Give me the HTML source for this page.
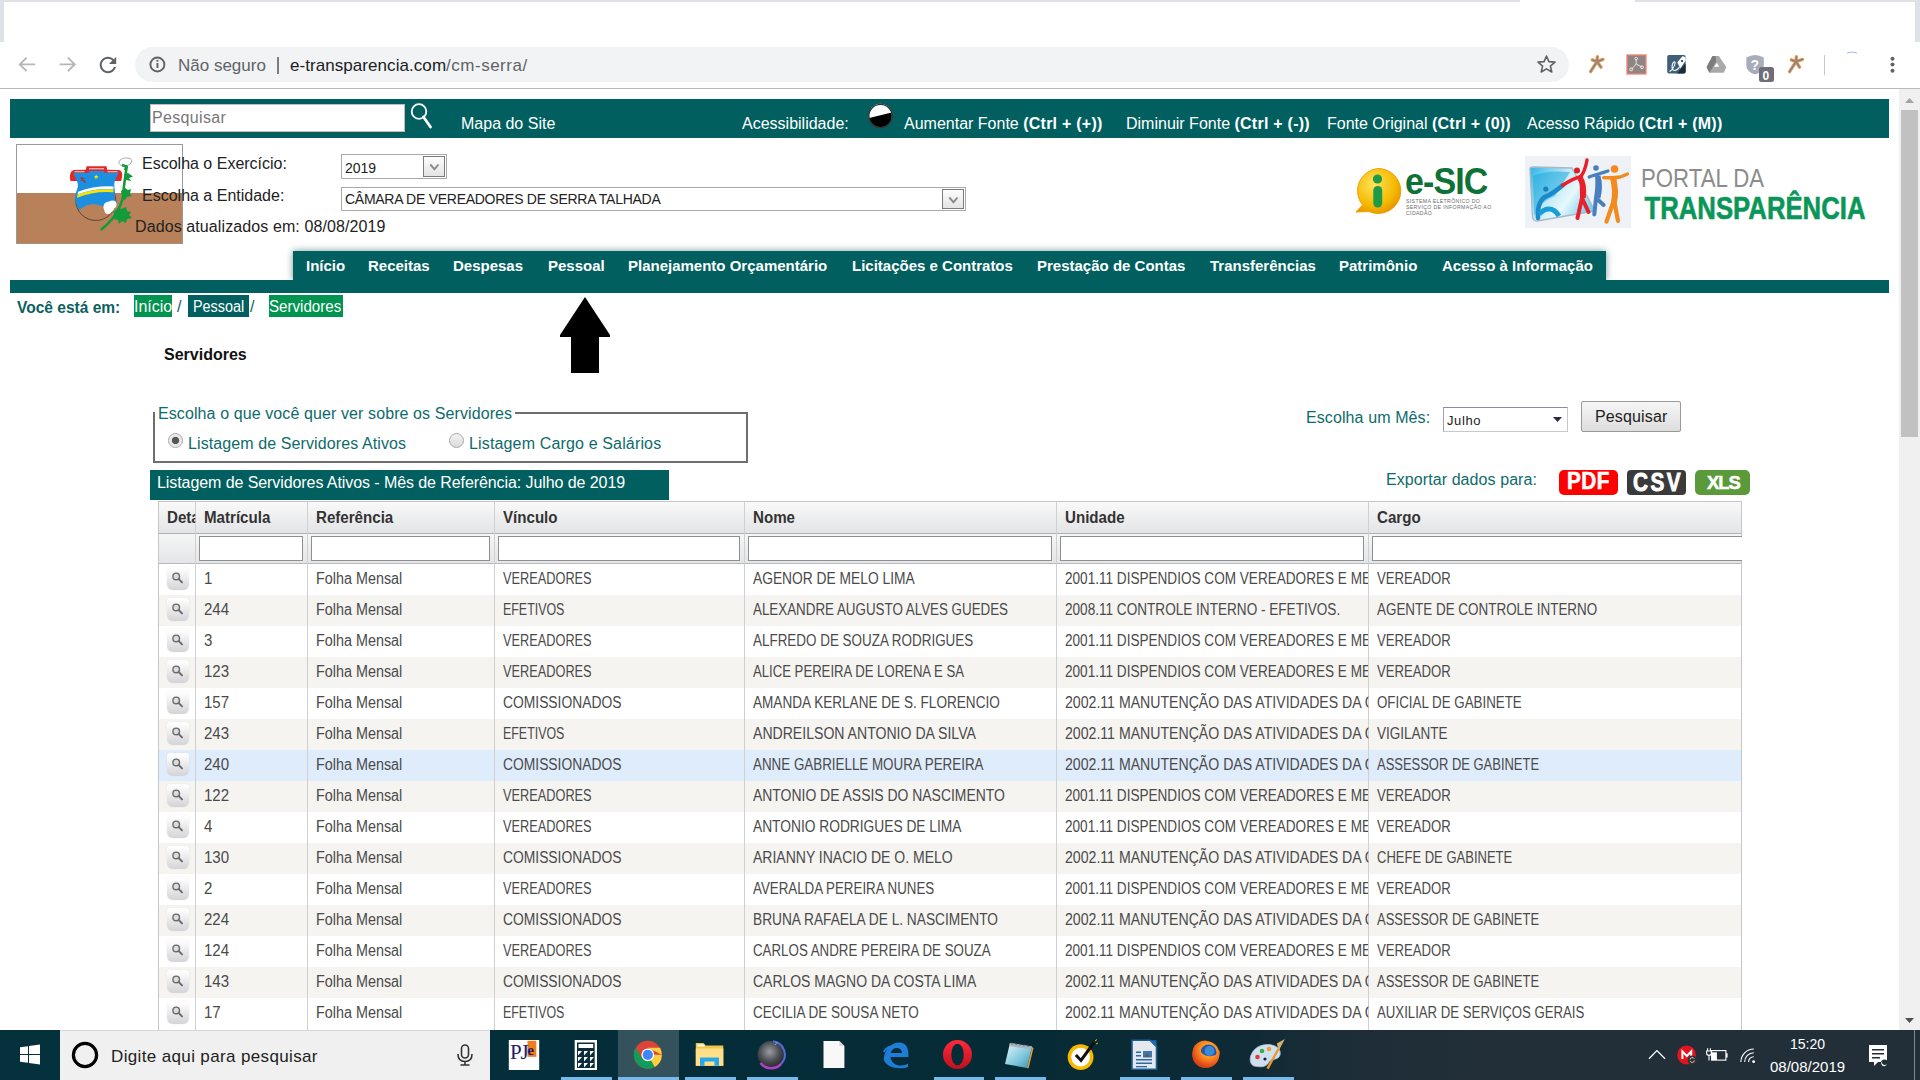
<!DOCTYPE html>
<html><head><meta charset="utf-8">
<style>
*{box-sizing:border-box;margin:0;padding:0}
html,body{width:1920px;height:1080px;overflow:hidden;background:#fff;font-family:"Liberation Sans",sans-serif;position:relative}
.a{position:absolute}
.t{position:absolute;white-space:nowrap;line-height:1}
/* chrome */
#tabstrip{left:0;top:0;width:1920px;height:2px;background:#dee1e6}
#pill{left:135px;top:47px;width:1434px;height:35px;border-radius:18px;background:#f1f3f4}
#addrline{left:0;top:88px;width:1920px;height:1px;background:#b9b9bb}
/* page */
#topbar{left:10px;top:99px;width:1879px;height:39px;background:#025f5f}
#search{left:150px;top:104px;width:255px;height:28px;background:#fff;border:1px solid #c9b9b9}
.wt{color:#fff;font-size:16px}
.sel{position:absolute;background:#fff;border:1px solid #a9a9a9}
.selbtn{position:absolute;border:1px solid #7c7c7c;background:linear-gradient(#fdfdfd,#e4e4e4)}
#nav{left:293px;top:251px;width:1313px;height:30px;background:#025f5f;box-shadow:0 0 7px rgba(2,70,70,.55)}
#navbar{left:10px;top:280px;width:1879px;height:13px;background:#025f5f}
.nv{position:absolute;top:258px;color:#fff;font-weight:bold;font-size:15px;line-height:1}
.bc{position:absolute;top:295px;height:22px;color:#fff;font-size:16px;line-height:22px}
/* table */
#tbl{left:158px;top:501px;width:1584px;height:540px;border:1px solid #c5c7c9;border-bottom:none;overflow:hidden}
.hd{position:absolute;top:0;height:32px;background:linear-gradient(#f9f9f9,#e3e4e6);border-bottom:1px solid #b0b1b4}
.fr{position:absolute;top:32px;height:30px;background:linear-gradient(#f6f6f6,#e4e5e7);border-bottom:1px solid #b8b9bc}
.vl{position:absolute;top:502px;width:1px;height:528px;background:#cfd0d2}
.fi{position:absolute;top:536px;height:25px;background:#fff;border:1px solid #8f8f8f}
.ht{position:absolute;top:510px;font-weight:bold;font-size:16px;color:#333;line-height:1;white-space:nowrap;transform:scaleX(0.944);transform-origin:0 0}
.row{position:absolute;left:159px;width:1582px;height:31px}
.row.e{background:#f5f4f1}
.row.h{background:#dfecfb}
.c{position:absolute;font-size:16px;color:#4a4a4a;line-height:22px;white-space:nowrap;overflow:hidden;transform-origin:0 0}
.db{position:absolute;width:22px;height:23px;border-radius:3px 3px 6px 6px;background:linear-gradient(#fdfdfd 10%,#e8e8ea 55%,#d4d4d8);box-shadow:0 0 1px #ccc}
/* taskbar */
#task{left:0;top:1030px;width:1920px;height:50px;background:linear-gradient(to right,#05303c 0px,#042e3a 500px,#052b36 1000px,#0f2a35 1250px,#1d2d37 1340px,#222f38 1500px,#222f38 1920px)}
</style></head><body>

<!-- browser chrome -->
<div class="a" id="tabstrip"></div>
<div class="a" style="left:1520px;top:0;width:115px;height:2px;background:#fff"></div>
<div class="a" style="left:0;top:0;width:4px;height:42px;background:#dee1e6"></div>
<div class="a" style="left:1915px;top:0;width:5px;height:42px;background:#dee1e6"></div>
<div class="a" id="pill"></div>
<div class="a" id="addrline"></div>


<!-- toolbar icons -->
<svg class="a" style="left:0;top:42px" width="1920" height="46">
 <g stroke="#b4b7ba" stroke-width="1.9" fill="none" stroke-linecap="butt">
  <path d="M20.5 22.4 H35.2 M26.6 15.6 L19.8 22.4 L26.6 29.2"/>
  <path d="M59.6 22.4 H74.3 M67.9 15.6 L74.7 22.4 L67.9 29.2"/>
 </g>
 <path transform="translate(95.6 10.6) scale(1.03)" d="M17.65 6.35C16.2 4.9 14.21 4 12 4c-4.42 0-7.99 3.58-7.99 8s3.57 8 7.99 8c3.73 0 6.84-2.55 7.73-6h-2.08c-.82 2.33-3.04 4-5.65 4-3.31 0-6-2.690-6-6s2.69-6 6-6c1.66 0 3.14.69 4.22 1.78L13 11h7V4l-2.35 2.35z" fill="#5f6368"/>
 <circle cx="157.4" cy="22.5" r="7" stroke="#5f6368" stroke-width="1.9" fill="none"/>
 <rect x="156.5" y="21" width="1.9" height="5" fill="#5f6368"/><rect x="156.5" y="17.8" width="1.9" height="1.9" fill="#5f6368"/>
 <polygon points="1546.5,14 1548.9,19.6 1555,20.1 1550.4,24.1 1551.8,30 1546.5,26.9 1541.2,30 1542.6,24.1 1538,20.1 1544.1,19.6" fill="none" stroke="#5f6368" stroke-width="1.6" stroke-linejoin="round"/>
 <g transform="translate(0 0)">
  <g stroke="#f39a3c" stroke-width="3.4" stroke-linecap="round" fill="none"><path d="M1592.3 17.8 L1597 19.6 M1597.4 14.6 L1597 19.6 M1603 17.4 L1597 19.6 L1601 25.2 M1597 19.6 L1590.6 29.6"/></g>
  <g stroke="#5b86c0" stroke-width="1.3" stroke-linecap="round" fill="none"><path d="M1592.3 17.8 L1597 19.6 M1597.4 14.6 L1597 19.6 M1603 17.4 L1597 19.6 L1601 25.2 M1597 19.6 L1590.6 29.6"/></g>
  <circle cx="1597" cy="19.6" r="1.3" fill="#f07020"/>
 </g>
 <rect x="1627" y="13" width="19" height="19" fill="#8f8585" stroke="#f2846e" stroke-width="1.3"/>
 <g stroke="#f4eeee" stroke-width="0.9" fill="none"><path d="M1636.2 17.5 L1636.2 22 L1631.5 27.3 M1636.2 22 L1641.8 25"/><circle cx="1636.2" cy="16.6" r="1.3"/><circle cx="1631.2" cy="27.4" r="1.5"/><circle cx="1642" cy="25.2" r="1.4"/></g>
 <rect x="1667.2" y="12.9" width="18.4" height="18.7" rx="1.8" fill="#3f6076"/>
 <path d="M1685.6 21.5 L1685.6 29.8 Q1685.6 31.6 1683.8 31.6 L1677 31.6 Z" fill="#1e2a36"/>
 <path d="M1677.3 20.6 L1682.6 14.1 L1685.6 15.6 L1685.6 18.5 L1680.3 26.6 Z" fill="#fff"/>
 <circle cx="1682" cy="19" r="1.1" fill="#1e2a36"/>
 <path d="M1669.5 29.5 C1672 28 1674.5 24 1675 21.5 C1675.5 19 1673.5 19.5 1672.5 22 C1671.5 25 1672 28.5 1674.5 28.5 C1676.5 28.5 1678.5 26.5 1679.5 25" stroke="#fff" stroke-width="1.1" fill="none"/>
 <polygon points="1712.5,14.1 1718.8,14.1 1726.3,25 1723.8,30.7 1709.4,30.7 1706.6,25" fill="#a9a9a9"/>
 <polygon points="1712.5,14.1 1715.6,14.1 1716.2,19.5 1709.4,30.7 1706.6,25" fill="#7c7c7c"/>
 <polygon points="1716.9,20.7 1714,24.75 1719.2,24.75" fill="#fff"/>
 <path d="M1746.3 15.5 Q1755 10.5 1763.8 15.5 L1763.8 23 C1763.8 28.5 1759 31.5 1755 32.3 C1751 31.5 1746.3 28.5 1746.3 23 Z" fill="#a8adb9"/>
 <text x="1750.6" y="27.6" font-family="Liberation Sans" font-weight="bold" font-size="14" fill="#fff">?</text>
 <rect x="1759" y="67" width="15" height="15" rx="2.5" fill="#6e6e7a" transform="translate(0 -42)"/>
 <text x="1762.4" y="37.6" font-family="Liberation Sans" font-weight="bold" font-size="12" fill="#fff">0</text>
 <g stroke="#f39a3c" stroke-width="3.4" stroke-linecap="round" fill="none"><path d="M1791.3 17.8 L1796 19.6 M1796.4 14.6 L1796 19.6 M1802.5 17.4 L1796 19.6 L1799.5 25.2 M1796 19.6 L1789.6 29.6"/></g>
 <g stroke="#5b86c0" stroke-width="1.3" stroke-linecap="round" fill="none"><path d="M1791.3 17.8 L1796 19.6 M1796.4 14.6 L1796 19.6 M1802.5 17.4 L1796 19.6 L1799.5 25.2 M1796 19.6 L1789.6 29.6"/></g>
 <circle cx="1796" cy="19.6" r="1.3" fill="#f07020"/>
 <rect x="1824" y="13" width="1" height="20" fill="#c8c8c8"/>
 <path d="M1847 11 Q1852 9 1857 11" stroke="#a9b6e0" stroke-width="1" fill="none"/>
 <circle cx="1892.5" cy="16.7" r="2" fill="#5f6368"/><circle cx="1892.5" cy="22.6" r="2" fill="#5f6368"/><circle cx="1892.5" cy="28.8" r="2" fill="#5f6368"/>
</svg>
<div class="t" style="left:178px;top:57px;font-size:17px;color:#5f6368">Não seguro</div>
<div class="a" style="left:277px;top:57px;width:2px;height:17px;background:#7a7d82"></div>
<div class="t" style="left:290px;top:57px;font-size:17px;color:#202124"><span style="letter-spacing:0.06px">e-transparencia.com</span><span style="color:#5f6368;letter-spacing:0.5px">/cm-serra/</span></div>

<!-- scrollbar -->
<div class="a" style="left:1899px;top:89px;width:21px;height:941px;background:#f0f0f0"></div>
<svg class="a" style="left:1899px;top:89px" width="21" height="941"><polygon points="6,14 15,14 10.5,9" fill="#a3a3a3"/><polygon points="6,929 15,929 10.5,934" fill="#505050"/></svg>
<div class="a" style="left:1901px;top:110px;width:17px;height:327px;background:#c1c1c1"></div>

<!-- page header bar -->
<div class="a" id="topbar"></div>
<div class="a" id="search"></div>
<div class="t" style="left:152px;top:110px;font-size:16px;color:#777;letter-spacing:0.35px">Pesquisar</div>

<svg class="a" style="left:405px;top:99px" width="40" height="39"><circle cx="14" cy="12.5" r="7.3" stroke="#fff" stroke-width="1.8" fill="none"/><line x1="18.5" y1="18" x2="25.5" y2="28" stroke="#fff" stroke-width="2.8" stroke-linecap="round"/></svg>
<svg class="a" style="left:866px;top:102px" width="28" height="28"><circle cx="14.5" cy="14" r="11.5" fill="#000" stroke="#555" stroke-width="1"/><path d="M3.3 16 A11.3 11.3 0 0 1 25.7 10.5 Z" fill="#fff"/><circle cx="14.5" cy="14" r="11.6" fill="none" stroke="#333" stroke-width="1.2"/></svg>
<div class="t wt" style="left:461px;top:116px">Mapa do Site</div>
<div class="t wt" style="left:742px;top:116px">Acessibilidade:</div>
<div class="t wt" style="left:904px;top:116px">Aumentar Fonte <b style="letter-spacing:0.25px">(Ctrl + (+))</b></div>
<div class="t wt" style="left:1126px;top:116px">Diminuir Fonte <b style="letter-spacing:0.25px">(Ctrl + (-))</b></div>
<div class="t wt" style="left:1327px;top:116px">Fonte Original <b style="letter-spacing:0.25px">(Ctrl + (0))</b></div>
<div class="t wt" style="left:1527px;top:116px">Acesso Rápido <b style="letter-spacing:0.25px">(Ctrl + (M))</b></div>

<!-- selectors -->
<!-- city flag logo -->
<svg class="a" style="left:16px;top:144px" width="168" height="101">
 <rect x="0.5" y="0.5" width="166" height="99" fill="#fff" stroke="#9a9a9a"/>
 <rect x="1" y="49" width="165" height="50.5" fill="#b98159"/>
 <circle cx="79.8" cy="56.5" r="20" fill="#b98159" stroke="#3a2a20" stroke-width="0.7"/>
 <path d="M54.5 37 C53 31 54.5 27 58 26 L69.8 25.8 L70.5 22.3 L90.5 22.3 L91.2 25.8 L103 26 C106.5 27 107 31 105.2 37 Z" fill="#e22828"/>
 <path d="M57.5 28.8 L73 28.8 L73 27 L88 27 L88 28.8 L102.8 28.8 C101 33 98 37 98.2 41 C98.5 45 99.5 48 98.6 51 C98 55 100 57 101.5 59.3 C96 59 92 61 88 63 C80 59 72 59 63.2 66 C60 60 58.5 55 59.4 51 C60.5 46 62 44 61.9 41 C61.5 36 58.5 33 57.5 28.8 Z" fill="#1b90e0"/>
 <g fill="#fff" opacity="0.85"><rect x="73" y="24.3" width="15" height="1"/><rect x="58.5" y="27.3" width="10" height="0.9"/><rect x="91.5" y="27.3" width="10" height="0.9"/></g>
 <path d="M61.5 50.5 Q79 44 97.5 45.5 L97.5 48.2 Q79 46.5 61 53.8 Z" fill="#f2e600"/>
 <path d="M62 47.8 Q79 41.5 97.5 42.5 L97.5 45.3 Q79 44 61.7 50.3 Z" fill="#fff"/>
 <path d="M64.5 33.5 L68.5 37 M68 33.8 L65 36.5 M67.5 36.5 L69.5 38.5" stroke="#c82020" stroke-width="1.3"/>
 <path d="M80.2 30.5 l0.7 1.6 1.7 0.1 -1.3 1.1 0.4 1.7 -1.5 -0.9 -1.5 0.9 0.4 -1.7 -1.3 -1.1 1.7 -0.1 z" fill="#f2e600"/>
 <circle cx="93" cy="63" r="5.6" fill="#fff"/><circle cx="96.5" cy="60.5" r="4" fill="#fff"/><circle cx="92" cy="66.5" r="3.5" fill="#fff"/>
 <path d="M84.8 86 C92 80 99 73 102.3 66 C105 60 107.3 55 107.3 51 C107.5 42 109.5 32 110.7 22.7" stroke="#139a3a" stroke-width="2.6" fill="none"/>
 <path d="M108 31 l4 -2 l5 3.5 l-4 1.5 l2 3 l-5 -1 l-2 -2 z" fill="#139a3a"/>
 <path d="M105 47 l4 -3 l3 2 l3 -1 l-1 5 l2 2 l-5 1 l-2 3 l-3 -3 z" fill="#139a3a"/>
 <path d="M97 68 l5 -4 l3 1 l5 -2 l1 4 l4 1 l-2 3 l3 3 l-5 1 l-1 4 l-4 -2 l-3 3 l-1 -4 l-4 -1 l2 -3 z" fill="#139a3a"/>
 <path d="M103 18.5 C103 15 109 13 114 14.5 C117 16 116 20 111 21.5 C106 22.5 103 21 103 18.5 Z" fill="#fff" stroke="#888" stroke-width="0.7"/>
 <path d="M106 21 L110.5 22.5 L109 26" stroke="#139a3a" stroke-width="2.4" fill="none"/>
</svg>


<div class="t" style="left:142px;top:156px;font-size:16px;color:#222">Escolha o Exercício:</div>
<div class="t" style="left:142px;top:188px;font-size:16px;color:#222">Escolha a Entidade:</div>
<div class="t" style="left:135px;top:219px;font-size:16px;color:#222;letter-spacing:0.1px">Dados atualizados em: 08/08/2019</div>
<div class="sel" style="left:341px;top:154px;width:106px;height:25px"></div>
<div class="selbtn" style="left:423px;top:156px;width:22px;height:21px"><svg width="20" height="19" style="position:absolute;left:0;top:0"><path d="M6.3 7.5 L10.5 12.2 L14.5 7.5" stroke="#8a8a8a" stroke-width="1.9" fill="none"/></svg></div>
<div class="t" style="left:345px;top:161px;font-size:14px;color:#222">2019</div>
<div class="sel" style="left:341px;top:187px;width:625px;height:24px"></div>
<div class="selbtn" style="left:942px;top:189px;width:22px;height:20px"><svg width="20" height="19" style="position:absolute;left:0;top:0"><path d="M6.3 7.5 L10.5 12.2 L14.5 7.5" stroke="#8a8a8a" stroke-width="1.9" fill="none"/></svg></div>
<div class="t" style="left:345px;top:192px;font-size:14px;color:#222;letter-spacing:-0.27px">CÂMARA DE VEREADORES DE SERRA TALHADA</div>


<!-- e-SIC logo -->
<svg class="a" style="left:1340px;top:150px" width="180" height="80">
 <defs><radialGradient id="yb" cx="40%" cy="35%" r="65%"><stop offset="0" stop-color="#ffe45a"/><stop offset="0.75" stop-color="#f5b800"/><stop offset="1" stop-color="#e89a00"/></radialGradient></defs>
 <path d="M37.5 18.5 A22.5 22.5 0 1 1 29 61.5 L16 62 L22.5 55 A22.5 22.5 0 0 1 37.5 18.5 Z" fill="url(#yb)" stroke="#eea000" stroke-width="1"/>
 <circle cx="37.5" cy="29" r="4.6" fill="#1e9a48"/>
 <rect x="33.3" y="36" width="8.9" height="21.5" rx="4.45" fill="#1e9a48"/>
 <text x="65" y="44" font-family="Liberation Sans" font-weight="bold" font-size="37" fill="#0e7236" letter-spacing="-1" transform="translate(65 0) scale(0.92 1) translate(-65 0)">e-SIC</text>
 <g font-family="Liberation Sans" font-size="5.2" fill="#6a6a6a" letter-spacing="0.35">
 <text x="66" y="53">SISTEMA ELETRÔNICO DO</text>
 <text x="66" y="59">SERVIÇO DE INFORMAÇÃO AO</text>
 <text x="66" y="64.8">CIDADÃO</text></g>
</svg>

<!-- portal logo -->
<svg class="a" style="left:1525px;top:156px" width="350" height="74">
 <defs><linearGradient id="scr" x1="0" y1="0" x2="1" y2="1"><stop offset="0" stop-color="#bfe6f8"/><stop offset="0.5" stop-color="#3fb0e0"/><stop offset="1" stop-color="#1a8cc8"/></linearGradient></defs>
 <rect x="0" y="0" width="106" height="72" fill="#eef2f6"/>
 <defs><linearGradient id="scr2" x1="0" y1="0" x2="1" y2="0.6"><stop offset="0" stop-color="#29b6e6"/><stop offset="0.45" stop-color="#bfeaf8"/><stop offset="0.7" stop-color="#e8f8fd"/><stop offset="1" stop-color="#7fd0ee"/></linearGradient></defs>
 <path d="M5 13 Q5 11 8 11 L47 12 L70 55 L12 65 Q8 65 7.5 61 Z" fill="url(#scr2)" stroke="#a8b8c4" stroke-width="1.3"/>
 <path d="M8 20 Q20 14 45 16 L30 40 Q15 45 9 60 Z" fill="#1ea8dc" opacity="0.55"/>
 <circle cx="20.8" cy="33" r="2.6" fill="#1a7fb8"/>
 <path d="M13 62 C12 50 16 42 22 40 C27 38 32 34 37.5 29.5" stroke="#1a8ac8" stroke-width="4.5" fill="none" stroke-linecap="round"/>
 <path d="M14 58 C20 52 28 50 34 60" stroke="#17a0d8" stroke-width="5" fill="none"/>
 <circle cx="52" cy="14.5" r="3" fill="#d8202a"/>
 <path d="M37.5 29.5 C44 25 50 22 56 20.5 C59 16 61 10 62 4" stroke="#e8202a" stroke-width="3.4" fill="none" stroke-linecap="round"/>
 <path d="M56 20.5 C57 30 57 38 57 42 L52.5 62 M57 42 L63.5 56" stroke="#e8202a" stroke-width="4" fill="none" stroke-linecap="round"/>
 <path d="M55 22 C58 26 59 34 58 42" stroke="#e8202a" stroke-width="5.5" fill="none"/>
 <circle cx="71" cy="12" r="2.8" fill="#4a7fbf"/>
 <path d="M64.2 21 C68 19 74 18 83 15" stroke="#4a7fbf" stroke-width="3.2" fill="none" stroke-linecap="round"/>
 <path d="M72 19 C73 28 72 36 71 42 L69.3 58.4 M71 42 L78.6 49" stroke="#4a7fbf" stroke-width="4" fill="none" stroke-linecap="round"/>
 <path d="M73 20 C75 27 75 34 73 42" stroke="#4a7fbf" stroke-width="5" fill="none"/>
 <circle cx="89.5" cy="13" r="3.8" fill="#f28a1e"/>
 <path d="M78.6 21.6 C85 22 90 22 95 21 C98 20 100 19 102.5 18" stroke="#f28a1e" stroke-width="3.4" fill="none" stroke-linecap="round"/>
 <path d="M89 22 C90 30 90 38 89 44 L81.5 65.6 M89 44 L93 64.9" stroke="#f28a1e" stroke-width="4.2" fill="none" stroke-linecap="round"/>
 <path d="M88 22 C90 30 91 38 89 46" stroke="#f28a1e" stroke-width="6" fill="none"/>
 <text x="116" y="30.6" font-family="Liberation Sans" font-size="26" fill="#8c8c8c" transform="translate(116 0) scale(0.855 1) translate(-116 0)">PORTAL DA</text>
 <text x="119.5" y="63" font-family="Liberation Sans" font-weight="bold" font-size="31" fill="#0a9658" stroke="#0a9658" stroke-width="0.6" transform="translate(119.5 0) scale(0.83 1) translate(-119.5 0)">TRANSPARÊNCIA</text>
</svg>

<!-- nav -->
<div class="a" id="nav"></div>
<div class="a" id="navbar"></div>
<div class="nv" style="left:306px">Início</div>
<div class="nv" style="left:368px">Receitas</div>
<div class="nv" style="left:453px">Despesas</div>
<div class="nv" style="left:548px">Pessoal</div>
<div class="nv" style="left:628px">Planejamento Orçamentário</div>
<div class="nv" style="left:852px">Licitações e Contratos</div>
<div class="nv" style="left:1037px">Prestação de Contas</div>
<div class="nv" style="left:1210px">Transferências</div>
<div class="nv" style="left:1339px">Patrimônio</div>
<div class="nv" style="left:1442px">Acesso à Informação</div>

<!-- breadcrumb -->
<div class="t" style="left:17px;top:300px;font-size:16px;font-weight:bold;color:#0b5f5f;transform:scaleX(0.97);transform-origin:0 0">Você está em:</div>
<div class="bc" style="left:134px;width:38px;background:#009450"></div>
<div class="bc" style="left:188px;width:61px;background:#025f5f"></div>
<div class="bc" style="left:269px;width:74px;background:#009450"></div>

<div class="t" style="left:164px;top:347px;font-size:16px;font-weight:bold;color:#111">Servidores</div>

<!-- arrow -->
<svg class="a" style="left:0;top:0" width="1920" height="400"><polygon points="585,297 610,335 610,337 599,337 599,373 571,373 571,337 560,337 560,335" fill="#000"/></svg>


<!-- breadcrumb text -->
<div class="t" style="left:134px;top:299px;font-size:16px;color:#fff">Início</div>
<div class="t" style="left:177px;top:299px;font-size:16px;color:#0b5f5f">/</div>
<div class="t" style="left:193px;top:299px;font-size:16px;color:#fff;transform:scaleX(0.9);transform-origin:0 0">Pessoal</div>
<div class="t" style="left:250px;top:299px;font-size:16px;color:#0b5f5f">/</div>
<div class="t" style="left:269px;top:299px;font-size:16px;color:#fff;transform:scaleX(0.944);transform-origin:0 0">Servidores</div>

<!-- fieldset -->
<div class="a" style="left:153px;top:412px;width:595px;height:51px;border:2px solid #6e6e6e;border-top:none"></div>
<div class="a" style="left:515px;top:412px;width:233px;height:2px;background:#6e6e6e"></div>
<div class="t" style="left:158px;top:406px;font-size:16px;color:#0e6b6b;letter-spacing:0.1px">Escolha o que você quer ver sobre os Servidores</div>
<div class="a" style="left:168px;top:433px;width:15px;height:15px;border-radius:50%;border:1px solid #a8a8a8;background:radial-gradient(circle,#555 0,#555 3.2px,#e0e0e0 4px,#f4f4f4 7px)"></div>
<div class="t" style="left:188px;top:436px;font-size:16px;color:#0e6b6b;letter-spacing:0.1px">Listagem de Servidores Ativos</div>
<div class="a" style="left:449px;top:433px;width:15px;height:15px;border-radius:50%;border:1px solid #a8a8a8;background:linear-gradient(#f2f2f2,#dcdcdc)"></div>
<div class="t" style="left:469px;top:436px;font-size:16px;color:#0e6b6b;letter-spacing:0.15px">Listagem Cargo e Salários</div>

<!-- month -->
<div class="t" style="left:1306px;top:410px;font-size:16px;color:#0e6b6b;letter-spacing:0.1px">Escolha um Mês:</div>
<div class="a" style="left:1443px;top:407px;width:125px;height:25px;border:1px solid #c8c8d2;border-top-color:#8a8aa0;border-left-color:#a0a0b4;background:#fff"></div>
<div class="t" style="left:1447px;top:414px;font-size:13px;color:#222;letter-spacing:0.6px">Julho</div>
<svg class="a" style="left:1553px;top:417px" width="9" height="6"><polygon points="0,0 9,0 4.5,5" fill="#2a2a40"/></svg>
<div class="a" style="left:1581px;top:401px;width:100px;height:31px;border:1px solid #999;border-radius:2px;background:linear-gradient(#f6f6f6,#dddddd)"></div>
<div class="t" style="left:1595px;top:409px;font-size:16px;color:#222;letter-spacing:0.15px">Pesquisar</div>

<!-- title bar -->
<div class="a" style="left:150px;top:470px;width:519px;height:30px;background:#025f5f"></div>
<div class="t" style="left:157px;top:475px;font-size:16px;color:#fff;letter-spacing:-0.08px">Listagem de Servidores Ativos - Mês de Referência: Julho de 2019</div>

<!-- export -->
<div class="t" style="left:1386px;top:472px;font-size:16px;color:#0e6b6b;letter-spacing:0.08px">Exportar dados para:</div>
<div class="a" style="left:1559px;top:470px;width:59px;height:25px;border-radius:5px;background:#f00"></div>
<div class="t" style="left:1567px;top:470px;font-size:23px;font-weight:bold;color:#fff;-webkit-text-stroke:0.6px #fff;transform:scaleX(0.9);transform-origin:0 0;letter-spacing:0.5px">PDF</div>
<div class="a" style="left:1627px;top:470px;width:59px;height:25px;border-radius:4px;background:#3a3a3a"></div>
<div class="t" style="left:1633px;top:469px;font-size:26px;font-weight:bold;color:#fff;-webkit-text-stroke:0.9px #fff;transform:scaleX(0.8);transform-origin:0 0;letter-spacing:3px">CSV</div>
<div class="a" style="left:1695px;top:470px;width:55px;height:25px;border-radius:5px;background:#5b9a3b"></div>
<div class="t" style="left:1707px;top:474px;font-size:18.5px;font-weight:bold;color:#fff;-webkit-text-stroke:0.5px #fff;letter-spacing:-1.1px">XLS</div>

<!-- TABLE -->
<div class="row" style="top:564px"></div>
<div class="row e" style="top:595px"></div>
<div class="row" style="top:626px"></div>
<div class="row e" style="top:657px"></div>
<div class="row" style="top:688px"></div>
<div class="row e" style="top:719px"></div>
<div class="row h" style="top:750px"></div>
<div class="row e" style="top:781px"></div>
<div class="row" style="top:812px"></div>
<div class="row e" style="top:843px"></div>
<div class="row" style="top:874px"></div>
<div class="row e" style="top:905px"></div>
<div class="row" style="top:936px"></div>
<div class="row e" style="top:967px"></div>
<div class="row" style="top:998px"></div>
<div class="hd" style="left:159px;top:502px;width:1582px"></div>
<div class="fr" style="left:159px;top:534px;width:1582px"></div>
<div class="vl" style="left:195px"></div>
<div class="vl" style="left:307px"></div>
<div class="vl" style="left:494px"></div>
<div class="vl" style="left:744px"></div>
<div class="vl" style="left:1056px"></div>
<div class="vl" style="left:1368px"></div>
<div class="a" style="left:158px;top:501px;width:1584px;height:1px;background:#c5c6c8"></div>
<div class="a" style="left:158px;top:501px;width:1px;height:529px;background:#c5c6c8"></div>
<div class="a" style="left:1741px;top:501px;width:1px;height:529px;background:#c5c6c8"></div>
<div class="ht" style="left:167px;width:30px;overflow:hidden">Detalhes</div>
<div class="ht" style="left:204px;width:109px;overflow:hidden">Matrícula</div>
<div class="ht" style="left:316px;width:189px;overflow:hidden">Referência</div>
<div class="ht" style="left:503px;width:255px;overflow:hidden">Vínculo</div>
<div class="ht" style="left:753px;width:321px;overflow:hidden">Nome</div>
<div class="ht" style="left:1065px;width:321px;overflow:hidden">Unidade</div>
<div class="ht" style="left:1377px;width:386px;overflow:hidden">Cargo</div>
<div class="fi" style="left:199px;width:104px"></div>
<div class="fi" style="left:311px;width:179px"></div>
<div class="fi" style="left:498px;width:242px"></div>
<div class="fi" style="left:748px;width:304px"></div>
<div class="fi" style="left:1060px;width:304px"></div>
<div class="fi" style="left:1372px;width:373px"></div>
<div class="a" style="left:1742px;top:534px;width:10px;height:30px;background:#fff"></div>
<div class="db" style="left:167px;top:567px"><svg width="22" height="22"><circle cx="9.2" cy="9.4" r="3.3" fill="#dcdcdc" stroke="#6a6a6a" stroke-width="1.4"/><line x1="11.6" y1="11.9" x2="15" y2="15.4" stroke="#6a6a6a" stroke-width="2" stroke-linecap="round"/></svg></div>
<div class="c" style="left:204px;top:568px;width:110px;transform:scaleX(0.94)">1</div>
<div class="c" style="left:316px;top:568px;width:198px;transform:scaleX(0.8979)">Folha Mensal</div>
<div class="c" style="left:503px;top:568px;width:302px;transform:scaleX(0.7973)">VEREADORES</div>
<div class="c" style="left:753px;top:568px;width:352px;transform:scaleX(0.8617)">AGENOR DE MELO LIMA</div>
<div class="c" style="left:1065px;top:568px;width:357px;transform:scaleX(0.8484)">2001.11 DISPENDIOS COM VEREADORES E MESA</div>
<div class="c" style="left:1377px;top:568px;width:443px;transform:scaleX(0.8222)">VEREADOR</div>
<div class="db" style="left:167px;top:598px"><svg width="22" height="22"><circle cx="9.2" cy="9.4" r="3.3" fill="#dcdcdc" stroke="#6a6a6a" stroke-width="1.4"/><line x1="11.6" y1="11.9" x2="15" y2="15.4" stroke="#6a6a6a" stroke-width="2" stroke-linecap="round"/></svg></div>
<div class="c" style="left:204px;top:599px;width:110px;transform:scaleX(0.94)">244</div>
<div class="c" style="left:316px;top:599px;width:198px;transform:scaleX(0.8979)">Folha Mensal</div>
<div class="c" style="left:503px;top:599px;width:311px;transform:scaleX(0.7759)">EFETIVOS</div>
<div class="c" style="left:753px;top:599px;width:363px;transform:scaleX(0.8354)">ALEXANDRE AUGUSTO ALVES GUEDES</div>
<div class="c" style="left:1065px;top:599px;width:357px;transform:scaleX(0.8488)">2008.11 CONTROLE INTERNO - EFETIVOS.</div>
<div class="c" style="left:1377px;top:599px;width:433px;transform:scaleX(0.8397)">AGENTE DE CONTROLE INTERNO</div>
<div class="db" style="left:167px;top:629px"><svg width="22" height="22"><circle cx="9.2" cy="9.4" r="3.3" fill="#dcdcdc" stroke="#6a6a6a" stroke-width="1.4"/><line x1="11.6" y1="11.9" x2="15" y2="15.4" stroke="#6a6a6a" stroke-width="2" stroke-linecap="round"/></svg></div>
<div class="c" style="left:204px;top:630px;width:110px;transform:scaleX(0.94)">3</div>
<div class="c" style="left:316px;top:630px;width:198px;transform:scaleX(0.8979)">Folha Mensal</div>
<div class="c" style="left:503px;top:630px;width:302px;transform:scaleX(0.7973)">VEREADORES</div>
<div class="c" style="left:753px;top:630px;width:361px;transform:scaleX(0.8397)">ALFREDO DE SOUZA RODRIGUES</div>
<div class="c" style="left:1065px;top:630px;width:357px;transform:scaleX(0.8484)">2001.11 DISPENDIOS COM VEREADORES E MESA</div>
<div class="c" style="left:1377px;top:630px;width:443px;transform:scaleX(0.8222)">VEREADOR</div>
<div class="db" style="left:167px;top:660px"><svg width="22" height="22"><circle cx="9.2" cy="9.4" r="3.3" fill="#dcdcdc" stroke="#6a6a6a" stroke-width="1.4"/><line x1="11.6" y1="11.9" x2="15" y2="15.4" stroke="#6a6a6a" stroke-width="2" stroke-linecap="round"/></svg></div>
<div class="c" style="left:204px;top:661px;width:110px;transform:scaleX(0.94)">123</div>
<div class="c" style="left:316px;top:661px;width:198px;transform:scaleX(0.8979)">Folha Mensal</div>
<div class="c" style="left:503px;top:661px;width:302px;transform:scaleX(0.7973)">VEREADORES</div>
<div class="c" style="left:753px;top:661px;width:369px;transform:scaleX(0.821)">ALICE PEREIRA DE LORENA E SA</div>
<div class="c" style="left:1065px;top:661px;width:357px;transform:scaleX(0.8484)">2001.11 DISPENDIOS COM VEREADORES E MESA</div>
<div class="c" style="left:1377px;top:661px;width:443px;transform:scaleX(0.8222)">VEREADOR</div>
<div class="db" style="left:167px;top:691px"><svg width="22" height="22"><circle cx="9.2" cy="9.4" r="3.3" fill="#dcdcdc" stroke="#6a6a6a" stroke-width="1.4"/><line x1="11.6" y1="11.9" x2="15" y2="15.4" stroke="#6a6a6a" stroke-width="2" stroke-linecap="round"/></svg></div>
<div class="c" style="left:204px;top:692px;width:110px;transform:scaleX(0.94)">157</div>
<div class="c" style="left:316px;top:692px;width:198px;transform:scaleX(0.8979)">Folha Mensal</div>
<div class="c" style="left:503px;top:692px;width:279px;transform:scaleX(0.865)">COMISSIONADOS</div>
<div class="c" style="left:753px;top:692px;width:357px;transform:scaleX(0.8488)">AMANDA KERLANE DE S. FLORENCIO</div>
<div class="c" style="left:1065px;top:692px;width:344px;transform:scaleX(0.882)">2002.11 MANUTENÇÃO DAS ATIVIDADES DA CAMARA</div>
<div class="c" style="left:1377px;top:692px;width:437px;transform:scaleX(0.8333)">OFICIAL DE GABINETE</div>
<div class="db" style="left:167px;top:722px"><svg width="22" height="22"><circle cx="9.2" cy="9.4" r="3.3" fill="#dcdcdc" stroke="#6a6a6a" stroke-width="1.4"/><line x1="11.6" y1="11.9" x2="15" y2="15.4" stroke="#6a6a6a" stroke-width="2" stroke-linecap="round"/></svg></div>
<div class="c" style="left:204px;top:723px;width:110px;transform:scaleX(0.94)">243</div>
<div class="c" style="left:316px;top:723px;width:198px;transform:scaleX(0.8979)">Folha Mensal</div>
<div class="c" style="left:503px;top:723px;width:311px;transform:scaleX(0.7759)">EFETIVOS</div>
<div class="c" style="left:753px;top:723px;width:345px;transform:scaleX(0.8795)">ANDREILSON ANTONIO DA SILVA</div>
<div class="c" style="left:1065px;top:723px;width:344px;transform:scaleX(0.882)">2002.11 MANUTENÇÃO DAS ATIVIDADES DA CAMARA</div>
<div class="c" style="left:1377px;top:723px;width:431px;transform:scaleX(0.8452)">VIGILANTE</div>
<div class="db" style="left:167px;top:753px"><svg width="22" height="22"><circle cx="9.2" cy="9.4" r="3.3" fill="#dcdcdc" stroke="#6a6a6a" stroke-width="1.4"/><line x1="11.6" y1="11.9" x2="15" y2="15.4" stroke="#6a6a6a" stroke-width="2" stroke-linecap="round"/></svg></div>
<div class="c" style="left:204px;top:754px;width:110px;transform:scaleX(0.94)">240</div>
<div class="c" style="left:316px;top:754px;width:198px;transform:scaleX(0.8979)">Folha Mensal</div>
<div class="c" style="left:503px;top:754px;width:279px;transform:scaleX(0.865)">COMISSIONADOS</div>
<div class="c" style="left:753px;top:754px;width:362px;transform:scaleX(0.8362)">ANNE GABRIELLE MOURA PEREIRA</div>
<div class="c" style="left:1065px;top:754px;width:344px;transform:scaleX(0.882)">2002.11 MANUTENÇÃO DAS ATIVIDADES DA CAMARA</div>
<div class="c" style="left:1377px;top:754px;width:449px;transform:scaleX(0.81)">ASSESSOR DE GABINETE</div>
<div class="db" style="left:167px;top:784px"><svg width="22" height="22"><circle cx="9.2" cy="9.4" r="3.3" fill="#dcdcdc" stroke="#6a6a6a" stroke-width="1.4"/><line x1="11.6" y1="11.9" x2="15" y2="15.4" stroke="#6a6a6a" stroke-width="2" stroke-linecap="round"/></svg></div>
<div class="c" style="left:204px;top:785px;width:110px;transform:scaleX(0.94)">122</div>
<div class="c" style="left:316px;top:785px;width:198px;transform:scaleX(0.8979)">Folha Mensal</div>
<div class="c" style="left:503px;top:785px;width:302px;transform:scaleX(0.7973)">VEREADORES</div>
<div class="c" style="left:753px;top:785px;width:348px;transform:scaleX(0.8709)">ANTONIO DE ASSIS DO NASCIMENTO</div>
<div class="c" style="left:1065px;top:785px;width:357px;transform:scaleX(0.8484)">2001.11 DISPENDIOS COM VEREADORES E MESA</div>
<div class="c" style="left:1377px;top:785px;width:443px;transform:scaleX(0.8222)">VEREADOR</div>
<div class="db" style="left:167px;top:815px"><svg width="22" height="22"><circle cx="9.2" cy="9.4" r="3.3" fill="#dcdcdc" stroke="#6a6a6a" stroke-width="1.4"/><line x1="11.6" y1="11.9" x2="15" y2="15.4" stroke="#6a6a6a" stroke-width="2" stroke-linecap="round"/></svg></div>
<div class="c" style="left:204px;top:816px;width:110px;transform:scaleX(0.94)">4</div>
<div class="c" style="left:316px;top:816px;width:198px;transform:scaleX(0.8979)">Folha Mensal</div>
<div class="c" style="left:503px;top:816px;width:302px;transform:scaleX(0.7973)">VEREADORES</div>
<div class="c" style="left:753px;top:816px;width:352px;transform:scaleX(0.8601)">ANTONIO RODRIGUES DE LIMA</div>
<div class="c" style="left:1065px;top:816px;width:357px;transform:scaleX(0.8484)">2001.11 DISPENDIOS COM VEREADORES E MESA</div>
<div class="c" style="left:1377px;top:816px;width:443px;transform:scaleX(0.8222)">VEREADOR</div>
<div class="db" style="left:167px;top:846px"><svg width="22" height="22"><circle cx="9.2" cy="9.4" r="3.3" fill="#dcdcdc" stroke="#6a6a6a" stroke-width="1.4"/><line x1="11.6" y1="11.9" x2="15" y2="15.4" stroke="#6a6a6a" stroke-width="2" stroke-linecap="round"/></svg></div>
<div class="c" style="left:204px;top:847px;width:110px;transform:scaleX(0.94)">130</div>
<div class="c" style="left:316px;top:847px;width:198px;transform:scaleX(0.8979)">Folha Mensal</div>
<div class="c" style="left:503px;top:847px;width:279px;transform:scaleX(0.865)">COMISSIONADOS</div>
<div class="c" style="left:753px;top:847px;width:346px;transform:scaleX(0.875)">ARIANNY INACIO DE O. MELO</div>
<div class="c" style="left:1065px;top:847px;width:344px;transform:scaleX(0.882)">2002.11 MANUTENÇÃO DAS ATIVIDADES DA CAMARA</div>
<div class="c" style="left:1377px;top:847px;width:448px;transform:scaleX(0.8133)">CHEFE DE GABINETE</div>
<div class="db" style="left:167px;top:877px"><svg width="22" height="22"><circle cx="9.2" cy="9.4" r="3.3" fill="#dcdcdc" stroke="#6a6a6a" stroke-width="1.4"/><line x1="11.6" y1="11.9" x2="15" y2="15.4" stroke="#6a6a6a" stroke-width="2" stroke-linecap="round"/></svg></div>
<div class="c" style="left:204px;top:878px;width:110px;transform:scaleX(0.94)">2</div>
<div class="c" style="left:316px;top:878px;width:198px;transform:scaleX(0.8979)">Folha Mensal</div>
<div class="c" style="left:503px;top:878px;width:302px;transform:scaleX(0.7973)">VEREADORES</div>
<div class="c" style="left:753px;top:878px;width:364px;transform:scaleX(0.833)">AVERALDA PEREIRA NUNES</div>
<div class="c" style="left:1065px;top:878px;width:357px;transform:scaleX(0.8484)">2001.11 DISPENDIOS COM VEREADORES E MESA</div>
<div class="c" style="left:1377px;top:878px;width:443px;transform:scaleX(0.8222)">VEREADOR</div>
<div class="db" style="left:167px;top:908px"><svg width="22" height="22"><circle cx="9.2" cy="9.4" r="3.3" fill="#dcdcdc" stroke="#6a6a6a" stroke-width="1.4"/><line x1="11.6" y1="11.9" x2="15" y2="15.4" stroke="#6a6a6a" stroke-width="2" stroke-linecap="round"/></svg></div>
<div class="c" style="left:204px;top:909px;width:110px;transform:scaleX(0.94)">224</div>
<div class="c" style="left:316px;top:909px;width:198px;transform:scaleX(0.8979)">Folha Mensal</div>
<div class="c" style="left:503px;top:909px;width:279px;transform:scaleX(0.865)">COMISSIONADOS</div>
<div class="c" style="left:753px;top:909px;width:354px;transform:scaleX(0.8566)">BRUNA RAFAELA DE L. NASCIMENTO</div>
<div class="c" style="left:1065px;top:909px;width:344px;transform:scaleX(0.882)">2002.11 MANUTENÇÃO DAS ATIVIDADES DA CAMARA</div>
<div class="c" style="left:1377px;top:909px;width:449px;transform:scaleX(0.81)">ASSESSOR DE GABINETE</div>
<div class="db" style="left:167px;top:939px"><svg width="22" height="22"><circle cx="9.2" cy="9.4" r="3.3" fill="#dcdcdc" stroke="#6a6a6a" stroke-width="1.4"/><line x1="11.6" y1="11.9" x2="15" y2="15.4" stroke="#6a6a6a" stroke-width="2" stroke-linecap="round"/></svg></div>
<div class="c" style="left:204px;top:940px;width:110px;transform:scaleX(0.94)">124</div>
<div class="c" style="left:316px;top:940px;width:198px;transform:scaleX(0.8979)">Folha Mensal</div>
<div class="c" style="left:503px;top:940px;width:302px;transform:scaleX(0.7973)">VEREADORES</div>
<div class="c" style="left:753px;top:940px;width:364px;transform:scaleX(0.8322)">CARLOS ANDRE PEREIRA DE SOUZA</div>
<div class="c" style="left:1065px;top:940px;width:357px;transform:scaleX(0.8484)">2001.11 DISPENDIOS COM VEREADORES E MESA</div>
<div class="c" style="left:1377px;top:940px;width:443px;transform:scaleX(0.8222)">VEREADOR</div>
<div class="db" style="left:167px;top:970px"><svg width="22" height="22"><circle cx="9.2" cy="9.4" r="3.3" fill="#dcdcdc" stroke="#6a6a6a" stroke-width="1.4"/><line x1="11.6" y1="11.9" x2="15" y2="15.4" stroke="#6a6a6a" stroke-width="2" stroke-linecap="round"/></svg></div>
<div class="c" style="left:204px;top:971px;width:110px;transform:scaleX(0.94)">143</div>
<div class="c" style="left:316px;top:971px;width:198px;transform:scaleX(0.8979)">Folha Mensal</div>
<div class="c" style="left:503px;top:971px;width:279px;transform:scaleX(0.865)">COMISSIONADOS</div>
<div class="c" style="left:753px;top:971px;width:347px;transform:scaleX(0.8727)">CARLOS MAGNO DA COSTA LIMA</div>
<div class="c" style="left:1065px;top:971px;width:344px;transform:scaleX(0.882)">2002.11 MANUTENÇÃO DAS ATIVIDADES DA CAMARA</div>
<div class="c" style="left:1377px;top:971px;width:449px;transform:scaleX(0.81)">ASSESSOR DE GABINETE</div>
<div class="db" style="left:167px;top:1001px"><svg width="22" height="22"><circle cx="9.2" cy="9.4" r="3.3" fill="#dcdcdc" stroke="#6a6a6a" stroke-width="1.4"/><line x1="11.6" y1="11.9" x2="15" y2="15.4" stroke="#6a6a6a" stroke-width="2" stroke-linecap="round"/></svg></div>
<div class="c" style="left:204px;top:1002px;width:110px;transform:scaleX(0.94)">17</div>
<div class="c" style="left:316px;top:1002px;width:198px;transform:scaleX(0.8979)">Folha Mensal</div>
<div class="c" style="left:503px;top:1002px;width:311px;transform:scaleX(0.7759)">EFETIVOS</div>
<div class="c" style="left:753px;top:1002px;width:359px;transform:scaleX(0.8444)">CECILIA DE SOUSA NETO</div>
<div class="c" style="left:1065px;top:1002px;width:344px;transform:scaleX(0.882)">2002.11 MANUTENÇÃO DAS ATIVIDADES DA CAMARA</div>
<div class="c" style="left:1377px;top:1002px;width:441px;transform:scaleX(0.8247)">AUXILIAR DE SERVIÇOS GERAIS</div>
<!-- taskbar -->
<div class="a" id="task"></div>

<div class="a" style="left:0;top:1030px;width:60px;height:50px;background:#05313d"></div>
<svg class="a" style="left:0;top:1030px" width="60" height="50"><polygon points="20,17.3 28,16.2 28,24 20,24" fill="#fff"/><polygon points="29,16.1 40,14.6 40,24 29,24" fill="#fff"/><polygon points="20,25 28,25 28,32.8 20,31.7" fill="#fff"/><polygon points="29,25 40,25 40,34.4 29,32.9" fill="#fff"/></svg>
<div class="a" style="left:60px;top:1030px;width:430px;height:50px;background:#f0f0f0;border-top:1px solid #d6d6d6"></div>
<svg class="a" style="left:60px;top:1030px" width="430" height="50"><circle cx="25" cy="25" r="11.6" fill="none" stroke="#000" stroke-width="3.2"/>
<rect x="401.5" y="15" width="7" height="13" rx="3.5" fill="none" stroke="#333" stroke-width="1.6"/><path d="M398 24 Q398 31.5 405 31.5 Q412 31.5 412 24 M405 31.5 V35 M400.5 35 H409.5" fill="none" stroke="#333" stroke-width="1.6"/></svg>
<div class="t" style="left:111px;top:1048px;font-size:17px;color:#222;letter-spacing:0.36px">Digite aqui para pesquisar</div>
<div class="a" style="left:618px;top:1030px;width:61px;height:50px;background:#34525b"></div>
<div class="a" style="left:561px;top:1077px;width:51px;height:3px;background:#76b9ed"></div>
<div class="a" style="left:618px;top:1077px;width:61px;height:3px;background:#76b9ed"></div>
<div class="a" style="left:685px;top:1077px;width:51px;height:3px;background:#76b9ed"></div>
<div class="a" style="left:747px;top:1077px;width:51px;height:3px;background:#76b9ed"></div>
<div class="a" style="left:934px;top:1077px;width:50px;height:3px;background:#76b9ed"></div>
<div class="a" style="left:995px;top:1077px;width:51px;height:3px;background:#76b9ed"></div>
<div class="a" style="left:1120px;top:1077px;width:50px;height:3px;background:#76b9ed"></div>
<div class="a" style="left:1181px;top:1077px;width:51px;height:3px;background:#76b9ed"></div>
<div class="a" style="left:1243px;top:1077px;width:51px;height:3px;background:#76b9ed"></div><svg class="a" style="left:490px;top:1030px" width="810" height="50">
 <defs>
  <radialGradient id="knob" cx="45%" cy="40%" r="60%"><stop offset="0" stop-color="#9a9ea3"/><stop offset="0.6" stop-color="#4a4e52"/><stop offset="1" stop-color="#25282b"/></radialGradient>
  <linearGradient id="oper" x1="0" y1="0" x2="0" y2="1"><stop offset="0" stop-color="#ff2a3a"/><stop offset="1" stop-color="#c0101e"/></linearGradient>
  <linearGradient id="note" x1="0" y1="0" x2="1" y2="1"><stop offset="0" stop-color="#e8f6fb"/><stop offset="0.6" stop-color="#7cc6dc"/><stop offset="1" stop-color="#3a90b0"/></linearGradient>
  <radialGradient id="ffx" cx="60%" cy="35%" r="65%"><stop offset="0" stop-color="#ffd84a"/><stop offset="0.5" stop-color="#ff8a1e"/><stop offset="1" stop-color="#d8401a"/></radialGradient>
 </defs>
 <rect x="18.8" y="10" width="30.4" height="30" fill="#fdfdfd"/>
 <rect x="37.5" y="10.8" width="8.8" height="16" fill="#f07c1e"/>
 <text x="20" y="29" font-family="Liberation Serif" font-size="21" fill="#1c1c6a" letter-spacing="-1.2">PJ</text>
 <text x="37.3" y="24.5" font-family="Liberation Serif" font-weight="bold" font-size="15" fill="#1c1c6a">e</text>
 <rect x="84.7" y="10" width="22.3" height="30" fill="#fff"/><rect x="87" y="12.5" width="17.7" height="25.5" fill="#0c2d38"/><rect x="88.5" y="14" width="14.7" height="4" fill="#fff"/>
 <g fill="#fff"><polygon points="88,21 92,21 88,25.5"/><polygon points="94,21 98,21 94,25.5"/><polygon points="100,21 104,21 100,25.5"/><polygon points="88,27 92,27 88,31.5"/><polygon points="94,27 98,27 94,31.5"/><polygon points="100,27 104,27 100,31.5"/><polygon points="88,33 92,33 88,37.5"/><polygon points="94,33 98,33 94,37.5"/><polygon points="100,33 104,33 100,37.5"/></g>
 <circle cx="157.8" cy="24.8" r="14" fill="#db4437"/>
 <path d="M157.8 24.8 L145.7 31.8 A14 14 0 0 0 164.8 36.9 Z" fill="#0f9d58"/>
 <path d="M157.8 24.8 L164.8 36.9 A14 14 0 0 0 171.8 24.8 Z" fill="#ffcd40"/>
 <path d="M145.7 17.8 A14 14 0 0 0 145.7 31.8 L151.8 28.3 Z" fill="#0f9d58"/>
 <path d="M171.8 24.8 A14 14 0 0 0 170 17.8 L157.8 17.8 Z" fill="#ffcd40"/>
 <circle cx="157.8" cy="24.8" r="6.4" fill="#fff"/><circle cx="157.8" cy="24.8" r="5.1" fill="#4285f4"/>
 <path d="M205.8 13 L213.5 13 L215.5 15.5 L233.3 15.5 L233.3 35.8 L205.8 35.8 Z" fill="#f4c44a"/><rect x="205.8" y="18.5" width="27.5" height="17.3" fill="#ffe08a"/>
 <rect x="207.5" y="14.5" width="7" height="2" fill="#fff"/>
 <path d="M210 35.8 V27.5 H229 V35.8 H224.5 V31.5 H214.5 V35.8 Z" fill="#2aa6e8"/>
 <circle cx="281" cy="24.5" r="13.5" fill="url(#knob)"/>
 <path d="M270.5 33 A13.5 13.5 0 0 0 291 34" stroke="#b040c0" stroke-width="2.6" fill="none"/>
 <path d="M291 34 A13.5 13.5 0 0 0 283 11.2" stroke="#5a6ad8" stroke-width="2" fill="none"/>
 <line x1="285" y1="15" x2="287" y2="12.5" stroke="#40d0e0" stroke-width="1"/>
 <path d="M333.5 11 H349.4 L354.4 16 V38 H333.5 Z" fill="#f8f8f8"/><path d="M349.4 11 V16 H354.4 Z" fill="#d6d6d6"/>
 <path d="M393.8 30 C394 19 402 12 410 12.5 C416 13 419 18 418.4 27 H400.5 C401 33 406 35.5 411 35.5 C414 35.5 416.5 34.5 418 33.5 V37 C415.5 38 412.5 38.5 409.5 38.3 C400 38 395.5 34 393.8 30 Z M400.8 23 H412 C411.8 19.5 409.5 18 406.5 18 C403.5 18 401.5 20 400.8 23 Z" fill="#1e7ed6"/>
 <path d="M393.8 22 C396 18 400 16.5 403 17" stroke="#1e7ed6" stroke-width="2" fill="none"/>
 <ellipse cx="467.5" cy="24.5" rx="14.5" ry="14.5" fill="url(#oper)"/><ellipse cx="467.5" cy="24.5" rx="6.2" ry="10.8" fill="#052c37"/>
 <path d="M520 13 L542 16.5 L537 38 L515 34 Z" fill="url(#note)"/><path d="M520 13 L542 16.5 L541.3 19.5 L519.3 16 Z" fill="#a8b4bc"/>
 <path d="M522 14.5 v-2 M526 15 v-2 M530 15.7 v-2 M534 16.3 v-2 M538 17 v-2" stroke="#555" stroke-width="0.9"/>
 <path d="M542 17 L543.5 18 L538.5 38.5 L537 38 Z" fill="#d8a040"/>
 <circle cx="590.6" cy="27.1" r="12.9" fill="#f7b900"/><circle cx="590.6" cy="27.1" r="9.3" fill="#fff"/>
 <path d="M585.9 25 L591 30.5 L604 12.5" stroke="#111" stroke-width="3" fill="none"/>
 <path d="M605 11 l2 -1.5 M606 14 l2 -1" stroke="#f7b900" stroke-width="1"/>
 <path d="M642 10.2 H660.5 L666.5 16.2 V39.3 H642 Z" fill="#e6e9ec" stroke="#1a5f9a" stroke-width="1.6"/>
 <path d="M659 10.2 L666.5 10.2 L666.5 17.7 Z" fill="#1a6aae"/>
 <rect x="653" y="21" width="9" height="6.5" fill="#3a7ab8"/><path d="M654 27 L657 23 L660 27 Z" fill="#6a5a40"/>
 <g fill="#2a6aa8"><rect x="646" y="21.5" width="5" height="1.5"/><rect x="646" y="25" width="5" height="1.5"/><rect x="646" y="29" width="16" height="1.5"/><rect x="646" y="32.5" width="16" height="1.5"/><rect x="646" y="36" width="11" height="1.3"/></g>
 <circle cx="715.9" cy="24.4" r="13.5" fill="url(#ffx)"/>
 <circle cx="718.5" cy="22.5" r="8" fill="#2456a8"/><circle cx="719.5" cy="21" r="5" fill="#3a8ad8"/>
 <path d="M703 19 C705 13 711 10 717 10.5 C712 12 709 15 710 19 C711 24 716 27 722 26 C728 25 730 21 729.4 19 C731 27 725 37 714 37.5 C707 37.5 702 31 702.4 24 Z" fill="url(#ffx)"/>
 <path d="M764 36 C757 33 760 20 770 16 C781 12 792 17 790 25 C788 31 781 28 779 32 C777 36 773 38 764 36 Z" fill="#cfe0ee" stroke="#a8c4da" stroke-width="0.8"/>
 <circle cx="767.5" cy="27" r="2.3" fill="#e03a3a"/><circle cx="772" cy="21" r="2.3" fill="#3ab040"/><circle cx="779" cy="19" r="2.3" fill="#f0a030"/><circle cx="775" cy="29" r="1.6" fill="#223"/>
 <path d="M777.5 38.6 L789 18" stroke="#e89a30" stroke-width="2.4"/><path d="M789 18 L792.4 11.5 L788 14 Z" fill="#d8b070" stroke="#d8b070" stroke-width="2"/>
</svg><svg class="a" style="left:1640px;top:1030px" width="280" height="50">
 <path d="M9 28.7 L16.9 20.6 L25 28.7" stroke="#fff" stroke-width="1.3" fill="none"/>
 <circle cx="46.6" cy="25" r="9.4" fill="#e3141e"/><path d="M42.4 29 V21.4 L46.8 26 L51.2 21.4 V29" stroke="#fff" stroke-width="2" fill="none"/>
 <circle cx="52.2" cy="30" r="4.6" fill="#333"/><path d="M50 29.5 A2.3 2.3 0 0 1 54.3 28.8 M54.4 30.5 A2.3 2.3 0 0 1 50.1 31.2" stroke="#ddd" stroke-width="0.9" fill="none"/>
 <path d="M67.6 18.3 V21 M70.4 18.3 V21 M66.6 21 H71.4 V23 Q71.4 25.3 69 25.3 Q66.6 25.3 66.6 23 Z M69 25.3 V30.6" stroke="#fff" stroke-width="1.1" fill="none"/>
 <rect x="71.6" y="20.6" width="14.3" height="9.5" fill="none" stroke="#fff" stroke-width="1.1"/><rect x="86" y="23.3" width="1.6" height="4.2" fill="#fff"/><rect x="71.6" y="22.3" width="5.3" height="7.8" fill="#fff"/>
 <path d="M100.9 31.9 A12.9 12.9 0 0 1 113.8 19 M104.7 31.9 A9.1 9.1 0 0 1 113.8 22.8 M108.6 31.9 A5.2 5.2 0 0 1 113.8 26.7" stroke="#fff" stroke-width="1.1" fill="none"/><circle cx="113.6" cy="31.7" r="1.4" fill="#fff"/>
 <path d="M229 15 H247 V32 H238 L234 36 V32 H229 Z" fill="#fff"/><rect x="232" y="19" width="12" height="1.5" fill="#222f38"/><rect x="232" y="23" width="12" height="1.5" fill="#222f38"/><rect x="232" y="27" width="8" height="1.5" fill="#222f38"/>
 <circle cx="244.5" cy="33" r="3.6" fill="#222f38"/><path d="M242.5 31 A2.8 2.8 0 1 0 246.8 33.8 A2.2 2.2 0 0 1 242.5 31 Z" fill="#fff"/>
 <rect x="274" y="0" width="1" height="50" fill="#7a8a90"/>
</svg>
<div class="t" style="left:1790px;top:1037px;font-size:14px;color:#fff">15:20</div>
<div class="t" style="left:1770px;top:1059px;font-size:15px;color:#fff">08/08/2019</div>

</body></html>
